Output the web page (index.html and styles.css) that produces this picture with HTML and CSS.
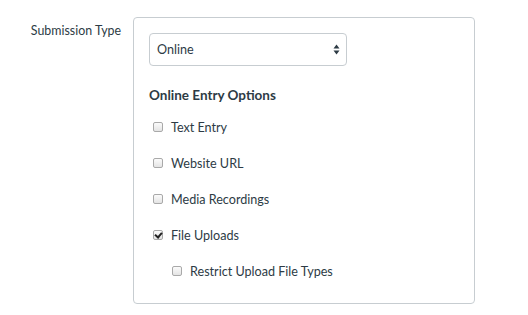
FILE: index.html
```html
<!DOCTYPE html>
<html lang="en">
<head>
    <meta charset="UTF-8">
    <title>Submission Type</title>
    <link rel="stylesheet" href="styles.css">
</head>
<body>
    <div class="form-row">
        <div class="label-col">Submission Type</div>
        <div class="fieldset">
            <div class="select">
                <span>Online</span>
                <svg class="arrows" width="7" height="11" viewBox="0 0 7 11">
                    <path d="M3.5 0.5 L6.5 4.5 L0.5 4.5 Z" fill="#2d3b45"/>
                    <path d="M0.5 6.5 L6.5 6.5 L3.5 10.5 Z" fill="#2d3b45"/>
                </svg>
            </div>

            <div class="options-title">Online Entry Options</div>

            <label class="check-row"><input type="checkbox" class="check"> Text Entry</label>
            <label class="check-row"><input type="checkbox" class="check"> Website URL</label>
            <label class="check-row"><input type="checkbox" class="check"> Media Recordings</label>
            <label class="check-row"><input type="checkbox" class="check" checked> File Uploads</label>
            <label class="check-row nested"><input type="checkbox" class="check"> Restrict Upload File Types</label>
        </div>
    </div>
</body>
</html>
```

FILE: styles.css
```css
body {
    margin: 0;
    font-family: Lato, "Liberation Sans", sans-serif;
    color: #2d3b45;
    background: white;
}
.form-row {
    display: flex;
    padding-top: 17px;
}
.label-col {
    width: 121px;
    text-align: right;
    font-size: 12.4px;
    line-height: 20px;
    padding-top: 4px;
}
.fieldset {
    margin-left: 12px;
    width: 342px;
    box-sizing: border-box;
    border: 1px solid #c7cdd1;
    border-radius: 4px;
    padding: 15px 15px 14px 15px;
}
.select {
    width: 198px;
    height: 33px;
    box-sizing: border-box;
    border: 1px solid #c7cdd1;
    border-radius: 4px;
    padding: 0 6px 0 7px;
    display: flex;
    align-items: center;
    justify-content: space-between;
    font-size: 12.6px;
}
.arrows {
    display: block;
}
.options-title {
    margin-top: 19px;
    font-weight: bold;
    font-size: 13.5px;
    line-height: 20px;
    margin-bottom: 4px;
}
.check-row {
    display: flex;
    align-items: center;
    height: 36px;
    font-size: 12.6px;
    padding-left: 4px;
}
.check-row.nested {
    padding-left: 23px;
}
.check {
    appearance: none;
    -webkit-appearance: none;
    width: 10px;
    height: 10px;
    margin: 0 8px 0 0;
    border: 1px solid #a9a9a9;
    border-radius: 2px;
    background: linear-gradient(#fbfbfb, #e4e4e4);
    box-sizing: border-box;
    position: relative;
}
.check:checked::after {
    content: "";
    position: absolute;
    left: 2px;
    top: 0px;
    width: 3px;
    height: 5px;
    border: solid #222;
    border-width: 0 2px 2px 0;
    transform: rotate(40deg);
}
```
